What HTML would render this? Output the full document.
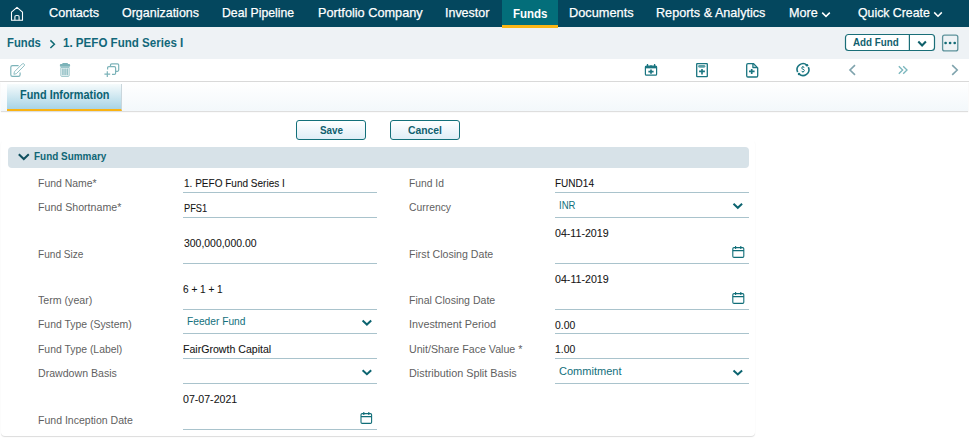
<!DOCTYPE html>
<html><head><meta charset="utf-8">
<style>
*{box-sizing:border-box;margin:0;padding:0}
html,body{width:969px;height:441px;overflow:hidden;background:#fff;font-family:"Liberation Sans",sans-serif}
.a{position:absolute;white-space:nowrap}
.t{position:absolute;white-space:nowrap;transform-origin:0 0;line-height:normal}
#nav{position:absolute;left:0;top:0;width:969px;height:27px;background:#04475e}
#act{position:absolute;left:502px;top:0;width:56px;height:25px;background:#036e7a}
#actb{position:absolute;left:502px;top:25px;width:56px;height:3px;background:#fbb614}
#bc{position:absolute;left:0;top:27px;width:969px;height:32px;background:#eef2f5}
#tb{position:absolute;left:0;top:59px;width:969px;height:23px;background:#fff;border-bottom:1px solid #d9d9d9}
#ts{position:absolute;left:1px;top:82px;width:967px;height:29px;background:linear-gradient(#fff,#f3f8fb);box-shadow:0 1px 1px rgba(0,0,0,.13)}
#tab{position:absolute;left:7px;top:84px;width:115px;height:27px;background:linear-gradient(#f6fbfc,#a8d4e5);border-bottom:2px solid #fab312;border-right:1px solid #c9d6dc}
.btn{position:absolute;top:120px;width:70px;height:20px;border:1px solid #13707a;border-radius:3px;background:linear-gradient(#fff,#dfeef6);font-size:12px;font-weight:bold;color:#1e5663;text-align:center;line-height:18px}
#card{position:absolute;left:1px;top:140px;width:754px;height:296px;border-radius:4px;box-shadow:0 1px 1px rgba(0,0,0,.14)}
#hdr{position:absolute;left:8px;top:147px;width:741px;height:21px;background:#d7e2e8;border-radius:4px}
.ln{position:absolute;height:1px;background:#a9c3cc}
</style></head><body>
<div id="nav"></div>
<div id="act"></div>
<svg class="a" style="left:0;top:0" width="30" height="27"><path d="M11.5 20.3V12.2L17 7.3l5.5 4.9v8.1z" fill="none" stroke="#fff" stroke-width="1.1" stroke-linejoin="round"/><path d="M14.9 20.3v-3.6q0-1.2 1.2-1.2h1.8q1.2 0 1.2 1.2v3.6" fill="none" stroke="#e8eef0" stroke-width="1.2"/></svg>

<div id="bc"></div><div id="actb"></div>

<div id="tb"></div>
<div id="ts"></div>
<div id="tab"></div>
<svg class="a" style="left:780px;top:0" width="189" height="27"><path d="M42.2 12.6l3.8 3.8 3.8-3.8" fill="none" stroke="#fff" stroke-width="1.5"/><path d="M154.2 12.4l3.8 3.8 3.8-3.8" fill="none" stroke="#fff" stroke-width="1.5"/></svg>
<svg class="a" style="left:0;top:27px" width="969" height="32">
<path d="M50.4 13.4l4 3.8-4 3.8" fill="none" stroke="#0e6a74" stroke-width="1.5"/>
<rect x="845.5" y="7.5" width="89" height="16" rx="3" fill="#fff" stroke="#1a6e78" stroke-width="1.2"/>
<path d="M909.4 7.5v16" stroke="#1a6e78" stroke-width="1.2"/>
<path d="M918.3 14.6l3.8 3.8 3.8-3.8" fill="none" stroke="#0e5f6a" stroke-width="2.1"/>
<rect x="942.6" y="8.1" width="15.2" height="15.8" rx="2" fill="#eef2f5" stroke="#5d929b" stroke-width="1.3"/>
<circle cx="945.6" cy="16" r="1.35" fill="#136b76"/><circle cx="950.1" cy="16" r="1.35" fill="#136b76"/><circle cx="954.7" cy="16" r="1.35" fill="#136b76"/>
</svg>
<svg class="a" style="left:0;top:59px" width="969" height="22">
<g fill="none" stroke="#7cb3b9" stroke-width="1.2">
<path d="M18.6 6.6H12.5q-1.7 0-1.7 1.7v7.4q0 1.7 1.7 1.7h5.9q1.7 0 1.7-1.7v-2.2" stroke-width="1.15"/>
<path d="M13.9 15.3l0.5-2.5 7.9-7.9q0.8-0.8 1.6 0l0.3 0.3q0.8 0.8 0 1.6l-7.9 7.9z" stroke-width="0.85"/>
</g>
<g fill="#7cb3b9"><rect x="62.3" y="4" width="5.6" height="1.6" rx="0.5"/><rect x="59.9" y="5.1" width="10.2" height="2.7" rx="0.8"/></g><path d="M60.9 8.4h8.2v8.3q0 0.6-0.6 0.6h-7q-0.6 0-0.6-0.6z" fill="none" stroke="#8fc0c5" stroke-width="1"/><g fill="#7cb3b9"><rect x="62.3" y="9.4" width="1.3" height="6.8"/><rect x="64.4" y="9.4" width="1.3" height="6.8"/><rect x="66.5" y="9.4" width="1.3" height="6.8"/></g>
<g fill="none" stroke="#7cb3b9" stroke-width="1.2">
<path d="M110.5 7V6q0-1.2 1.2-1.2h5.8q1.2 0 1.2 1.2v5.1q0 1.2-1.2 1.2h-1.6"/>
<path d="M107.6 10.6V8.9q0-1.2 1.2-1.2h5.6q1.2 0 1.2 1.2v5.3q0 1.2-1.2 1.2h-2.4"/>
<path d="M107.3 12.3v5.8M104.4 15.2h5.8"/>
</g>
<g fill="none" stroke="#1a7580" stroke-width="1.2">
<rect x="645.4" y="7" width="11.2" height="9.2" rx="1"/>
<path d="M645.4 8.2h11.2" stroke-width="2.3"/>
<path d="M647.5 5v3M654.6 5v3" stroke-width="1.3"/>
<circle cx="651" cy="7.2" r="1" fill="#1a7580" stroke="none"/>
<path d="M651 10.5v4.2M648.4 12.6h5.2" stroke-width="1.7"/>
<rect x="696.7" y="4.6" width="10.6" height="13.1" rx="0.5" stroke-width="1.3"/>
<path d="M699.5 7.3h4.5" stroke-width="2.8" stroke-linecap="round" stroke="#5a9fa6"/>
<path d="M702 9.9v5.5M699.1 12.4h5.8" stroke-width="1.6"/>
<path d="M753.5 5.3l3.6 3.3h-3.6z" fill="#b5d5d8" stroke="none"/><path d="M753.6 4.6h-5.6q-1.3 0-1.3 1.3v10.8q0 1.3 1.3 1.3h8.4q1.3 0 1.3-1.3V8.9z M752.9 4.6v4h4.6" stroke-width="1.3" stroke-linejoin="round"/>
<path d="M751.7 9.9v5M749 12.4h5.6" stroke-width="1.7"/>
<path d="M797.65 13.09A5.9 5.9 0 0 1 806.95 6.22" stroke-width="1.6"/><path d="M808.35 8.11A5.9 5.9 0 0 1 799.05 14.98" stroke-width="1.6"/><circle cx="806.95" cy="6.22" r="1.3" fill="#1a7580" stroke="none"/><circle cx="799.05" cy="14.98" r="1.3" fill="#1a7580" stroke="none"/><path d="M804.3 8.9q-0.4-0.9-1.4-0.9q-1.3 0-1.3 1q0 0.8 1.4 1.2q1.4 0.4 1.4 1.4q0 1.1-1.5 1.1q-1.1 0-1.6-0.9M802.9 7v1M802.9 12.6v1" stroke-width="0.95"/>
</g>
<g fill="none" stroke-width="1.6">
<path d="M855 6.2l-5 4.8 5 4.8" stroke="#7fa3ad"/>
<path d="M898.8 7.2l3.8 3.8-3.8 3.8M903.2 7.2l3.8 3.8-3.8 3.8" stroke="#7ab6bd" stroke-width="1.35"/>
<path d="M952.2 6.2l5 4.8-5 4.8" stroke="#7fa3ad"/>
</g>
</svg>


<div class="btn" style="left:296px"></div>
<div class="btn" style="left:390px"></div>

<div id="card"></div>
<div id="hdr"></div>
<svg class="a" style="left:0;top:140px" width="40" height="30"><path d="M18.8 14.2l5 4.8 5-4.8" fill="none" stroke="#0e4f5e" stroke-width="2"/></svg>

<div class="ln" style="left:183px;top:192px;width:194px"></div>
<div class="ln" style="left:183px;top:217px;width:194px"></div>
<div class="ln" style="left:183px;top:263px;width:194px"></div>
<div class="ln" style="left:183px;top:309px;width:194px"></div>
<div class="ln" style="left:183px;top:333px;width:194px"></div>
<div class="ln" style="left:183px;top:358px;width:194px"></div>
<div class="ln" style="left:183px;top:383px;width:194px"></div>
<div class="ln" style="left:183px;top:429px;width:194px"></div>

<div class="ln" style="left:555px;top:192px;width:194px"></div>
<div class="ln" style="left:555px;top:217px;width:194px"></div>
<div class="ln" style="left:555px;top:263px;width:194px"></div>
<div class="ln" style="left:555px;top:309px;width:194px"></div>
<div class="ln" style="left:555px;top:333px;width:194px"></div>
<div class="ln" style="left:555px;top:358px;width:194px"></div>
<div class="ln" style="left:555px;top:383px;width:194px"></div>

<svg class="a" style="left:0;top:0" width="969" height="441"><path d="M362.6 320.6l4.3 4 4.3-4" fill="none" stroke="#0c6470" stroke-width="2"/><path d="M362.6 370.2l4.3 4 4.3-4" fill="none" stroke="#0c6470" stroke-width="2"/><path d="M733.5 203.8l4.3 4 4.3-4" fill="none" stroke="#0c6470" stroke-width="2"/><path d="M733.5 370.4l4.3 4 4.3-4" fill="none" stroke="#0c6470" stroke-width="2"/><g fill="none" stroke="#106e78" stroke-width="1.1"><rect x="361" y="413.6" width="10.6" height="9.8" rx="1.2"/><path d="M361 416.6h10.6M363.8 412v3M368.8 412v3"/></g><g fill="none" stroke="#106e78" stroke-width="1.1"><rect x="732.8" y="247.6" width="11" height="9.8" rx="1.2"/><path d="M732.8 250.6h11M735.5999999999999 246v3M740.8 246v3"/></g><g fill="none" stroke="#106e78" stroke-width="1.1"><rect x="732.8" y="293.6" width="11" height="9.8" rx="1.2"/><path d="M732.8 296.6h11M735.5999999999999 292v3M740.8 292v3"/></g></svg>
<div class="t" style="left:49.00px;top:5.00px;font-size:13px;color:#fff;transform:scaleX(0.9749);-webkit-text-stroke:0.25px #fff">Contacts</div>
<div class="t" style="left:122.00px;top:5.00px;font-size:13px;color:#fff;transform:scaleX(0.9600);-webkit-text-stroke:0.25px #fff">Organizations</div>
<div class="t" style="left:222.30px;top:5.00px;font-size:13px;color:#fff;transform:scaleX(0.9408);-webkit-text-stroke:0.25px #fff">Deal Pipeline</div>
<div class="t" style="left:317.60px;top:5.00px;font-size:13px;color:#fff;transform:scaleX(0.9792);-webkit-text-stroke:0.25px #fff">Portfolio Company</div>
<div class="t" style="left:445.20px;top:5.00px;font-size:13px;color:#fff;transform:scaleX(0.9586);-webkit-text-stroke:0.25px #fff">Investor</div>
<div class="t" style="left:569.30px;top:5.00px;font-size:13px;color:#fff;transform:scaleX(0.9821);-webkit-text-stroke:0.25px #fff">Documents</div>
<div class="t" style="left:656.20px;top:5.00px;font-size:13px;color:#fff;transform:scaleX(0.9706);-webkit-text-stroke:0.25px #fff">Reports &amp; Analytics</div>
<div class="t" style="left:788.80px;top:5.00px;font-size:13px;color:#fff;transform:scaleX(0.9683);-webkit-text-stroke:0.25px #fff">More</div>
<div class="t" style="left:857.60px;top:5.00px;font-size:13px;color:#fff;transform:scaleX(0.9465);-webkit-text-stroke:0.25px #fff">Quick Create</div>
<div class="t" style="left:512.50px;top:5.70px;font-size:13px;font-weight:bold;color:#fff;transform:scaleX(0.8846)">Funds</div>
<div class="t" style="left:6.90px;top:34.90px;font-size:13px;font-weight:bold;color:#12687a;transform:scaleX(0.8692)">Funds</div>
<div class="t" style="left:62.90px;top:34.90px;font-size:13px;font-weight:bold;color:#12687a;transform:scaleX(0.8906)">1. PEFO Fund Series I</div>
<div class="t" style="left:853.40px;top:35.80px;font-size:11.5px;font-weight:bold;color:#11606e;transform:scaleX(0.8537)">Add Fund</div>
<div class="t" style="left:19.70px;top:86.90px;font-size:13px;font-weight:bold;color:#0b6272;transform:scaleX(0.8375)">Fund Information</div>
<div class="t" style="left:319.80px;top:123.80px;font-size:11.5px;font-weight:bold;color:#10606e;transform:scaleX(0.8603)">Save</div>
<div class="t" style="left:408.20px;top:123.80px;font-size:11.5px;font-weight:bold;color:#10606e;transform:scaleX(0.9014)">Cancel</div>
<div class="t" style="left:34.10px;top:149.90px;font-size:11.5px;font-weight:bold;color:#0f6776;transform:scaleX(0.8636)">Fund Summary</div>
<div class="t" style="left:37.70px;top:175.80px;font-size:11.75px;color:#5f5f5f;transform:scaleX(0.8897)">Fund Name*</div>
<div class="t" style="left:38.00px;top:200.00px;font-size:11.75px;color:#5f5f5f;transform:scaleX(0.9043)">Fund Shortname*</div>
<div class="t" style="left:38.00px;top:246.90px;font-size:11.75px;color:#5f5f5f;transform:scaleX(0.8596)">Fund Size</div>
<div class="t" style="left:37.90px;top:293.20px;font-size:11.75px;color:#5f5f5f;transform:scaleX(0.9044)">Term (year)</div>
<div class="t" style="left:37.90px;top:317.00px;font-size:11.75px;color:#5f5f5f;transform:scaleX(0.8875)">Fund Type (System)</div>
<div class="t" style="left:37.90px;top:342.00px;font-size:11.75px;color:#5f5f5f;transform:scaleX(0.8857)">Fund Type (Label)</div>
<div class="t" style="left:37.90px;top:365.90px;font-size:11.75px;color:#5f5f5f;transform:scaleX(0.9013)">Drawdown Basis</div>
<div class="t" style="left:37.90px;top:412.80px;font-size:11.75px;color:#5f5f5f;transform:scaleX(0.8960)">Fund Inception Date</div>
<div class="t" style="left:409.10px;top:176.00px;font-size:11.75px;color:#5f5f5f;transform:scaleX(0.8762)">Fund Id</div>
<div class="t" style="left:409.10px;top:200.20px;font-size:11.75px;color:#5f5f5f;transform:scaleX(0.8815)">Currency</div>
<div class="t" style="left:409.10px;top:246.70px;font-size:11.75px;color:#5f5f5f;transform:scaleX(0.9019)">First Closing Date</div>
<div class="t" style="left:409.00px;top:292.80px;font-size:11.75px;color:#5f5f5f;transform:scaleX(0.8979)">Final Closing Date</div>
<div class="t" style="left:409.00px;top:317.00px;font-size:11.75px;color:#5f5f5f;transform:scaleX(0.9176)">Investment Period</div>
<div class="t" style="left:409.00px;top:342.00px;font-size:11.75px;color:#5f5f5f;transform:scaleX(0.9058)">Unit/Share Face Value *</div>
<div class="t" style="left:409.00px;top:366.00px;font-size:11.75px;color:#5f5f5f;transform:scaleX(0.9221)">Distribution Split Basis</div>
<div class="t" style="left:183.90px;top:175.90px;font-size:11.75px;color:#141414;transform:scaleX(0.8528);-webkit-text-stroke:0.08px #141414">1. PEFO Fund Series I</div>
<div class="t" style="left:183.90px;top:200.90px;font-size:11.75px;color:#141414;transform:scaleX(0.7898);-webkit-text-stroke:0.08px #141414">PFS1</div>
<div class="t" style="left:184.00px;top:235.90px;font-size:11.75px;color:#141414;transform:scaleX(0.8878);-webkit-text-stroke:0.08px #141414">300,000,000.00</div>
<div class="t" style="left:183.30px;top:282.30px;font-size:11.75px;color:#141414;transform:scaleX(0.8554);-webkit-text-stroke:0.08px #141414">6 + 1 + 1</div>
<div class="t" style="left:187.40px;top:314.10px;font-size:11.75px;color:#12707c;transform:scaleX(0.8682)">Feeder Fund</div>
<div class="t" style="left:183.30px;top:342.20px;font-size:11.75px;color:#141414;transform:scaleX(0.9006);-webkit-text-stroke:0.08px #141414">FairGrowth Capital</div>
<div class="t" style="left:183.30px;top:392.30px;font-size:11.75px;color:#141414;transform:scaleX(0.9018);-webkit-text-stroke:0.08px #141414">07-07-2021</div>
<div class="t" style="left:555.40px;top:176.10px;font-size:11.75px;color:#141414;transform:scaleX(0.8533);-webkit-text-stroke:0.08px #141414">FUND14</div>
<div class="t" style="left:559.00px;top:198.10px;font-size:11.75px;color:#12707c;transform:scaleX(0.8115)">INR</div>
<div class="t" style="left:555.40px;top:226.00px;font-size:11.75px;color:#141414;transform:scaleX(0.9051);-webkit-text-stroke:0.08px #141414">04-11-2019</div>
<div class="t" style="left:555.30px;top:272.20px;font-size:11.75px;color:#141414;transform:scaleX(0.9068);-webkit-text-stroke:0.08px #141414">04-11-2019</div>
<div class="t" style="left:555.30px;top:317.80px;font-size:11.75px;color:#141414;transform:scaleX(0.8839);-webkit-text-stroke:0.08px #141414">0.00</div>
<div class="t" style="left:555.30px;top:341.50px;font-size:11.75px;color:#141414;transform:scaleX(0.8839);-webkit-text-stroke:0.08px #141414">1.00</div>
<div class="t" style="left:558.60px;top:364.20px;font-size:11.75px;color:#12707c;transform:scaleX(0.9396)">Commitment</div>
</body></html>
